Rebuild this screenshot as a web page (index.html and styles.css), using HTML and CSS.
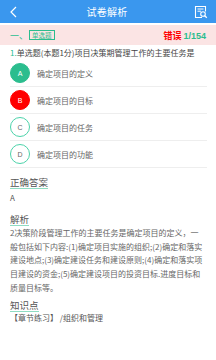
FILE: index.html
```html
<!DOCTYPE html>
<html>
<head>
<meta charset="utf-8">
<link rel="stylesheet" href="styles.css">
</head>
<body>
<div class="header">
  <svg class="back" width="12" height="14" viewBox="0 0 12 14"><polyline points="8,2 3,7 8,12" fill="none" stroke="#fff" stroke-width="1.2"/></svg>
  <div class="title">试卷解析</div>
  <svg class="doc" width="14" height="14" viewBox="0 0 14 14">
    <path d="M8 12.5 H1.5 V1.5 H11.5 V6.5" fill="none" stroke="#fff" stroke-width="1.1"/>
    <line x1="3.5" y1="4" x2="9.5" y2="4" stroke="#fff" stroke-width="1"/>
    <line x1="3.5" y1="6.2" x2="7" y2="6.2" stroke="#fff" stroke-width="1"/>
    <circle cx="9" cy="9" r="2.3" fill="none" stroke="#fff" stroke-width="1.1"/>
    <line x1="10.7" y1="10.7" x2="12.8" y2="12.8" stroke="#fff" stroke-width="1.3"/>
  </svg>
</div>
<div class="status">
  <div class="type"><span class="num">一、</span><span class="tag">单选题</span></div>
  <div class="score"><span class="wrong">错误</span> <span class="count">1/154</span></div>
</div>
<div class="question"><span class="qn">1.</span>单选题(本题1分)项目决策期管理工作的主要任务是</div>
<div class="options">
  <div class="opt"><span class="circle right">A</span><span class="otext">确定项目的定义</span></div>
  <div class="opt"><span class="circle bad">B</span><span class="otext">确定项目的目标</span></div>
  <div class="opt"><span class="circle">C</span><span class="otext">确定项目的任务</span></div>
  <div class="opt"><span class="circle">D</span><span class="otext">确定项目的功能</span></div>
</div>
<div class="section">
  <div class="shead"><span>正确答案</span></div>
  <div class="sbody answer">A</div>
</div>
<div class="section s2">
  <div class="shead"><span>解析</span></div>
  <div class="sbody para">2决策阶段管理工作的主要任务是确定项目的定义，一般包括如下内容:(1)确定项目实施的组织;(2)确定和落实建设地点;(3)确定建设任务和建设原则;(4)确定和落实项目建设的资金;(5)确定建设项目的投资目标.进度目标和质量目标等。</div>
</div>
<div class="section s3">
  <div class="shead"><span>知识点</span></div>
  <div class="sbody">【章节练习】 /组织和管理</div>
</div>
</body>
</html>
```
FILE: styles.css
```css
html, body {
  margin: 0;
  padding: 0;
  background: #fff;
}
body {
  width: 216px;
  font-family: "Noto Sans CJK SC", "Noto Sans", sans-serif;
  color: #555;
}
.header {
  height: 23px;
  background: #3a97ee;
  display: flex;
  align-items: center;
  justify-content: space-between;
  padding: 0 8px 0 8px;
}
.back { display: block; }
.title {
  color: #fff;
  font-size: 10px;
  line-height: 23px;
  letter-spacing: 0.3px;
}
.doc { display: block; }
.status {
  margin-top: 2px;
  height: 20px;
  background: #fbe4e4;
  display: flex;
  align-items: center;
  justify-content: space-between;
  padding: 0 10px;
}
.type { display: flex; align-items: center; }
.num { color: #2bbd8e; font-size: 9px; }
.tag {
  border: 1px solid #2bbd8e;
  color: #2bbd8e;
  font-size: 6.5px;
  line-height: 8px;
  padding: 0 2px;
  margin-left: 1px;
}
.score { font-size: 9px; font-weight: bold; }
.wrong { color: #f00; }
.count { color: #2bbd8e; font-family: "Liberation Sans", sans-serif; }
.question {
  font-size: 8px;
  line-height: 12px;
  color: #444;
  padding: 2px 10px 0 10px;
}
.qn { color: #2bbd8e; }
.options {
  padding: 1px 9px 0 10px;
}
.opt {
  height: 26px;
  border-bottom: 1px solid #eee;
  display: flex;
  align-items: center;
}
.circle {
  width: 18px;
  height: 18px;
  border-radius: 50%;
  border: 1px solid #4cd3aa;
  color: #666;
  font-size: 7px;
  font-family: "Liberation Sans", sans-serif;
  display: flex;
  align-items: center;
  justify-content: center;
  box-sizing: content-box;
}
.circle.right { background: #2bbd8e; border-color: #2bbd8e; color: #fff; }
.circle.bad { background: #f00; border-color: #f00; color: #fff; }
.otext {
  font-size: 8px;
  color: #666;
  margin-left: 7px;
}
.section {
  padding: 8px 10px 0 10px;
}
.s2 { padding-top: 10px; }
.s3 { padding-top: 4px; }
.shead {
  display: flex;
  font-size: 9.5px;
  line-height: 12px;
}
.shead span {
  color: #555;
  border-bottom: 1.5px solid #8fdcc2;
}
.sbody {
  font-size: 8px;
  line-height: 11px;
  color: #555;
}
.answer { margin-top: 3px; }
.para {
  line-height: 13.7px;
  color: #666;
}
```
